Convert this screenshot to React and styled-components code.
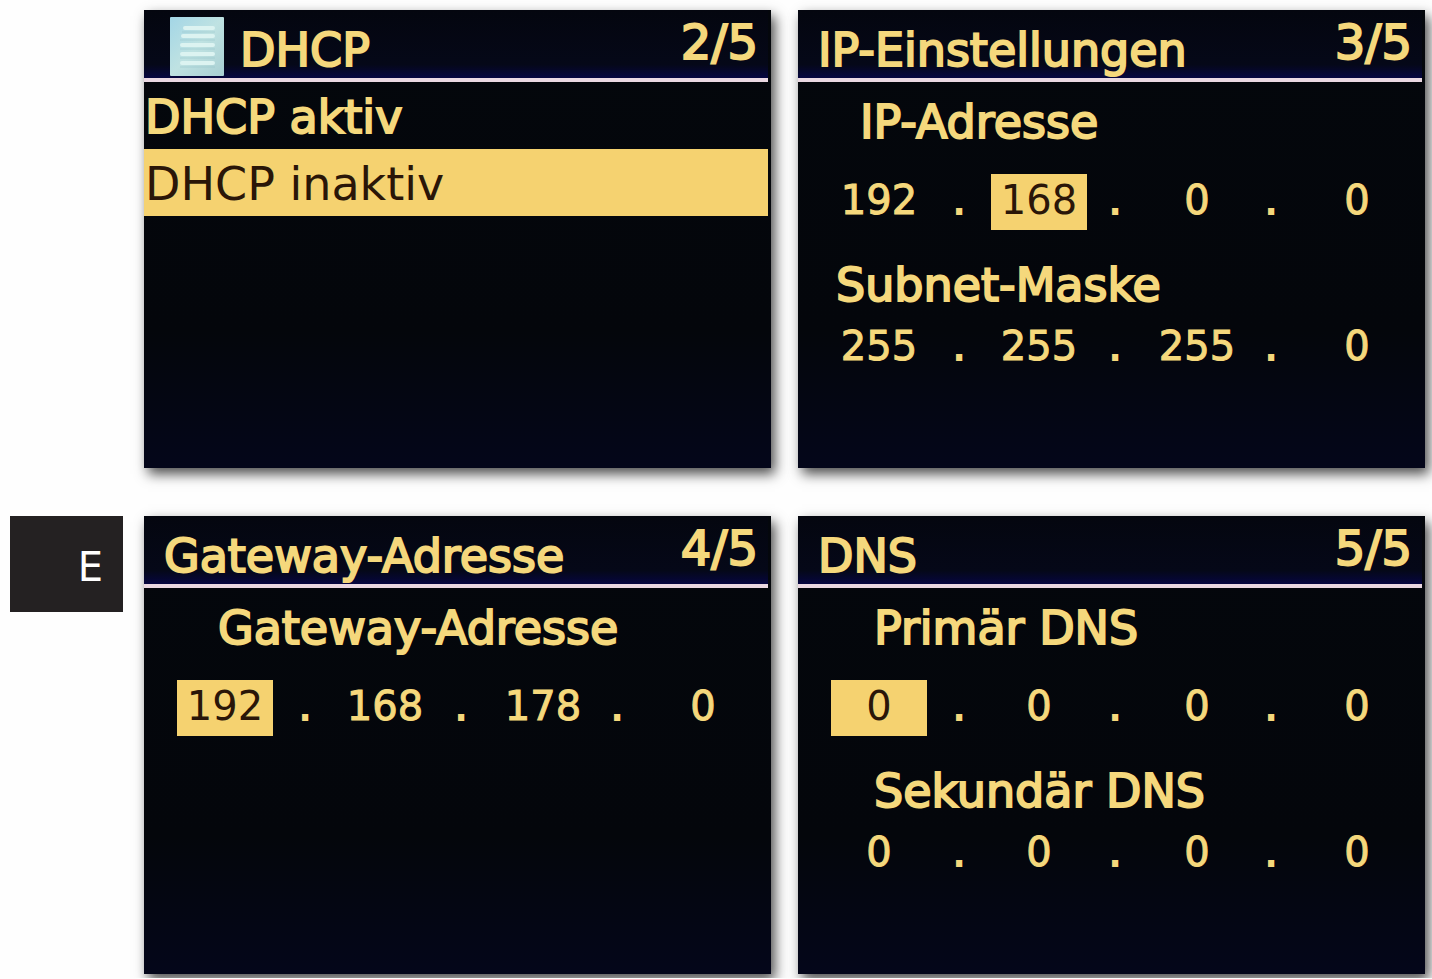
import React from "react";
import styled, { createGlobalStyle } from "styled-components";

const screens = [
  {
    title: "DHCP",
    page: "2/5",
    icon: true,
    options: [
      { label: "DHCP aktiv", selected: false },
      { label: "DHCP inaktiv", selected: true },
    ],
  },
  {
    title: "IP-Einstellungen",
    page: "3/5",
    fields: [
      { label: "IP-Adresse", indent: 62, octets: [192, 168, 0, 0], active: 1 },
      { label: "Subnet-Maske", indent: 38, octets: [255, 255, 255, 0] },
    ],
  },
  {
    title: "Gateway-Adresse",
    page: "4/5",
    fields: [
      {
        label: "Gateway-Adresse",
        indent: 74,
        octets: [192, 168, 178, 0],
        active: 0,
      },
    ],
  },
  {
    title: "DNS",
    page: "5/5",
    fields: [
      { label: "Primär DNS", indent: 76, octets: [0, 0, 0, 0], active: 0 },
      { label: "Sekundär DNS", indent: 76, octets: [0, 0, 0, 0] },
    ],
  },
];

const DocumentIcon = () => (
  <IconSvg viewBox="0 0 54 59" aria-hidden="true">
    <defs>
      <linearGradient id="paper" x1="0" y1="0" x2="1" y2="1">
        <stop offset="0" stopColor="#a3d6e6" />
        <stop offset="0.5" stopColor="#bfe2e2" />
        <stop offset="1" stopColor="#a8cfd2" />
      </linearGradient>
    </defs>
    <rect width="54" height="59" rx="1" fill="url(#paper)" />
    <g stroke="#dcf3f1" strokeWidth="4" strokeLinecap="round">
      <path d="M15 11H43M13 19H43M12 28H43M12 37H43M12 46H43" />
    </g>
    <g stroke="#9bc8ce" strokeWidth="1" opacity="0.6">
      <path d="M12 15H45M10 23H45M10 32H45M10 41H45M10 50H45" />
    </g>
  </IconSvg>
);

const AddressField = ({ label, indent, octets, active }) => {
  const id = React.useId();

  return (
    <Field role="group" aria-labelledby={id}>
      <FieldLabel id={id} $indent={indent}>
        {label}
      </FieldLabel>
      <Octets>
        {octets.map((value, i) => (
          <React.Fragment key={i}>
            {i > 0 && <Dot>.</Dot>}
            <Octet
              type="text"
              inputMode="numeric"
              maxLength={3}
              size={3}
              defaultValue={value}
              aria-label={`${label} ${i + 1}`}
              $active={i === active}
            />
          </React.Fragment>
        ))}
      </Octets>
    </Field>
  );
};

const Screen = ({ title, page, icon, options, fields }) => (
  <Panel>
    <Header>
      <Heading>
        {icon && <DocumentIcon />}
        <Title>{title}</Title>
      </Heading>
      <Counter>{page}</Counter>
    </Header>
    {options && (
      <OptionList>
        {options.map((option) => (
          <li key={option.label}>
            <Option
              type="button"
              aria-pressed={option.selected}
              $selected={option.selected}
            >
              {option.label}
            </Option>
          </li>
        ))}
      </OptionList>
    )}
    {fields && (
      <Fields>
        {fields.map((field) => (
          <AddressField key={field.label} {...field} />
        ))}
      </Fields>
    )}
  </Panel>
);

const App = () => (
  <>
    <GlobalStyle />
    <Page>
      <Margin>
        <ChapterTab>E</ChapterTab>
      </Margin>
      <Screens>
        {screens.map((screen) => (
          <Screen key={screen.page} {...screen} />
        ))}
      </Screens>
    </Page>
  </>
);

const GlobalStyle = createGlobalStyle`
  * {
    box-sizing: border-box;
  }

  body {
    margin: 0;
    background: #fefefe;
    font-family: "DejaVu Sans", sans-serif;
  }
`;

const Page = styled.div`
  display: grid;
  grid-template-columns: 113px 1fr;
  column-gap: 21px;
  padding: 10px 7px 4px 10px;
`;

const Margin = styled.aside`
  display: grid;
  grid-template-rows: 1fr 1fr;
  row-gap: 48px;
`;

const ChapterTab = styled.div`
  grid-row: 2;
  display: flex;
  align-items: center;
  justify-content: flex-end;
  height: 96px;
  padding: 6px 20px 0 0;
  background: #242122;
  color: #fff;
  font-size: 40px;
  line-height: 56px;
`;

const Screens = styled.main`
  display: grid;
  grid-template-columns: 1fr 1fr;
  gap: 48px 27px;
`;

const Panel = styled.section`
  min-width: 0;
  aspect-ratio: 627 / 458;
  background: linear-gradient(#04070c, #04060b 70%, #04061a);
  color: #f5d87c;
  font-size: 46px;
  line-height: 56px;
  -webkit-text-stroke: 2px currentColor;
  box-shadow: 4px 6px 12px rgba(0, 0, 0, 0.7);
`;

const Header = styled.header`
  display: flex;
  justify-content: space-between;
  align-items: flex-start;
  height: 72px;
  margin-right: 3px;
  padding: 4px 10px 0 20px;
  border-bottom: 4px solid #ead8e2;
  background: linear-gradient(#04060f, #050818 80%, #060640);
`;

const Heading = styled.div`
  display: flex;
  gap: 16px;
`;

const IconSvg = styled.svg`
  width: 54px;
  height: 59px;
  margin: 3px 0 0 6px;
`;

const Title = styled.h2`
  margin: 0;
  padding-top: 8px;
  font-size: 46px;
  font-weight: 400;
`;

const Counter = styled.span`
  font-size: 48px;
`;

const OptionList = styled.ul`
  margin: 0 3px 0 0;
  padding: 0;
  list-style: none;
`;

const Option = styled.button`
  display: block;
  width: 100%;
  padding: 4px 0 1px 1px;
  border: none;
  background: ${({ $selected }) => ($selected ? "#f5d270" : "transparent")};
  color: ${({ $selected }) => ($selected ? "#2a1608" : "inherit")};
  font: inherit;
  line-height: 62px;
  text-align: left;
  cursor: pointer;
  -webkit-text-stroke: ${({ $selected }) => ($selected ? "0" : "2px")};
`;

const Fields = styled.div`
  display: flex;
  flex-direction: column;
  gap: 27px;
  padding: 12px 2px 0 33px;
`;

const Field = styled.div`
  display: flex;
  flex-direction: column;
  gap: 7px;

  &:first-child {
    gap: 24px;
  }
`;

const FieldLabel = styled.div`
  padding-left: ${({ $indent }) => $indent - 33}px;
`;

const Octets = styled.div`
  display: grid;
  grid-template-columns: 96fr 64fr 96fr 56fr 108fr 40fr 132fr;
  font-size: 40px;
`;

const Octet = styled.input`
  width: 100%;
  min-width: 0;
  height: 56px;
  padding: 0 0 5px;
  border: none;
  background: ${({ $active }) => ($active ? "#f5d270" : "transparent")};
  color: ${({ $active }) => ($active ? "#2a1608" : "inherit")};
  font: inherit;
  text-align: center;
  -webkit-text-stroke: ${({ $active }) => ($active ? "0" : "1px")};
`;

const Dot = styled.span`
  height: 56px;
  line-height: 52px;
  text-align: center;
`;

export default App;
